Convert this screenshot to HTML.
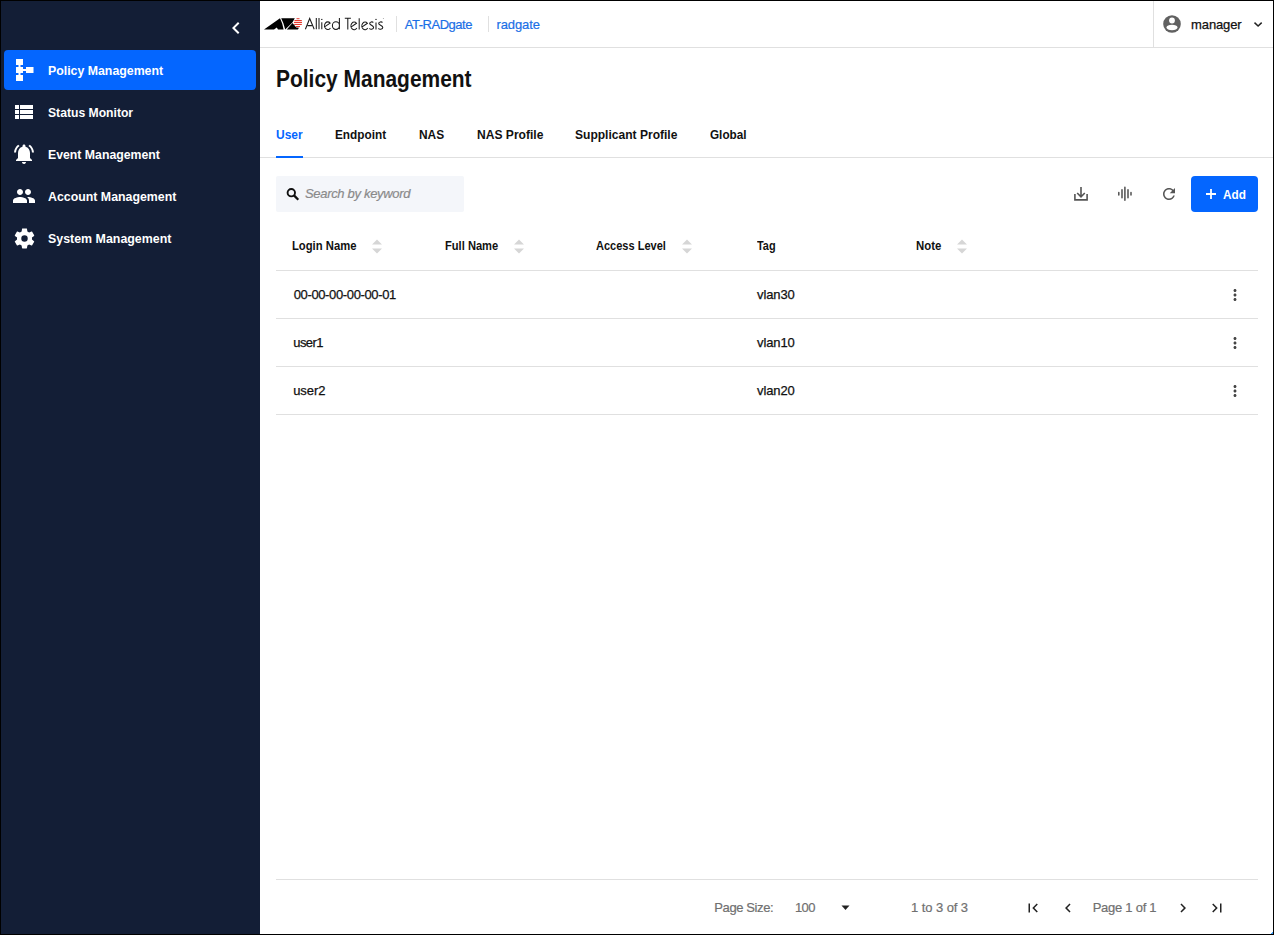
<!DOCTYPE html>
<html><head><meta charset="utf-8"><title>Policy Management</title>
<style>
html,body{margin:0;padding:0;}
body{width:1274px;height:935px;overflow:hidden;position:relative;background:#fff;font-family:"Liberation Sans",sans-serif;}
.t{position:absolute;white-space:nowrap;}
svg{display:block;}
#frame{position:absolute;left:0;top:0;width:1274px;height:935px;box-sizing:border-box;border:1px solid #000;pointer-events:none;}
</style></head><body>
<div style="position:absolute;left:1px;top:1px;width:259px;height:933px;background:#131e36"></div>
<svg style="position:absolute;left:224px;top:16px" width="24" height="24" viewBox="0 0 24 24"><path fill="#fff" d="M15.41 7.41L14 6l-6 6 6 6 1.41-1.41L10.83 12z"/></svg>
<div style="position:absolute;left:4px;top:50px;width:252px;height:40px;border-radius:4px;background:#0466ff"></div>
<svg style="position:absolute;left:0;top:0" width="60" height="260"><g fill="#fff"><rect x="16" y="59" width="7" height="6"/><rect x="16" y="67" width="7" height="6"/><rect x="16" y="75" width="7" height="6"/><rect x="18.5" y="64" width="2" height="12"/><rect x="26" y="67" width="7.5" height="6"/><rect x="22" y="69" width="5" height="2"/></g></svg>
<svg style="position:absolute;left:12px;top:100px" width="24" height="24" viewBox="0 0 24 24"><path fill="#fff" d="M3 14h4v-4H3v4zm0 5h4v-4H3v4zM3 9h4V5H3v4zm5 5h13v-4H8v4zm0 5h13v-4H8v4zM8 5v4h13V5H8z"/></svg>
<svg style="position:absolute;left:11.5px;top:141.5px" width="24" height="24" viewBox="0 0 24 24"><path fill="#fff" d="M7.58 4.08L6.15 2.65C3.75 4.48 2.17 7.3 2.03 10.5h2a8.445 8.445 0 013.55-6.42zm12.39 6.42h2c-.15-3.2-1.73-6.02-4.12-7.85l-1.42 1.43a8.495 8.495 0 013.54 6.42zM18 11c0-3.07-1.64-5.64-4.5-6.32V4c0-.83-.67-1.5-1.5-1.5s-1.5.67-1.5 1.5v.68C7.63 5.36 6 7.92 6 11v5l-2 2v1h16v-1l-2-2v-5zm-6 11c.14 0 .27-.01.4-.04.65-.14 1.18-.58 1.440-1.18.1-.24.15-.5.15-.78h-4c.01 1.1.9 2 2.01 2z"/></svg>
<svg style="position:absolute;left:12px;top:184px" width="24" height="24" viewBox="0 0 24 24"><path fill="#fff" d="M16 11c1.66 0 2.99-1.34 2.99-3S17.66 5 16 5c-1.66 0-3 1.34-3 3s1.34 3 3 3zm-8 0c1.66 0 2.99-1.34 2.99-3S9.66 5 8 5C6.34 5 5 6.34 5 8s1.34 3 3 3zm0 2c-2.33 0-7 1.17-7 3.5V19h14v-2.5c0-2.330-4.67-3.5-7-3.5zm8 0c-.29 0-.62.02-.97.05 1.16.84 1.97 1.97 1.97 3.45V19h6v-2.5c0-2.33-4.67-3.5-7-3.5z"/></svg>
<svg style="position:absolute;left:11.5px;top:225.5px" width="25" height="25" viewBox="0 0 24 24"><path fill="#fff" fill-rule="evenodd" d="M19.14 12.94c.04-.3.06-.61.06-.94 0-.32-.02-.64-.07-.94l2.03-1.58c.18-.14.23-.41.12-.61l-1.920-3.32c-.12-.22-.37-.29-.59-.22l-2.39.96c-.5-.38-1.03-.7-1.62-.94l-.36-2.54c-.04-.24-.24-.41-.48-.41h-3.84c-.24 0-.43.17-.47.41l-.36 2.54c-.59.24-1.13.57-1.62.94l-2.39-.96c-.22-.08-.47 0-.59.22L2.74 8.87c-.12.21-.08.47.12.61l2.03 1.58c-.05.3-.09.63-.09.94s.02.64.07.94l-2.03 1.58c-.18.14-.23.41-.12.61l1.92 3.32c.12.22.37.29.59.22l2.39-.96c.5.38 1.03.7 1.62.94l.36 2.54c.05.24.24.41.48.41h3.84c.24 0 .44-.17.47-.41l.36-2.54c.59-.24 1.13-.56 1.62-.94l2.39.96c.22.08.47 0 .59-.22l1.92-3.32c.12-.22.07-.47-.12-.61l-2.01-1.58zM12 15.1a3.1 3.1 0 1 0 0-6.2a3.1 3.1 0 1 0 0 6.2z"/></svg>
<div class="t" style="left:48.00px;top:63.99px;font-size:13px;line-height:13px;color:#fff;font-weight:bold;transform:scaleX(0.9483);transform-origin:0 0;">Policy Management</div>
<div class="t" style="left:48.00px;top:105.99px;font-size:13px;line-height:13px;color:#fff;font-weight:bold;transform:scaleX(0.9353);transform-origin:0 0;">Status Monitor</div>
<div class="t" style="left:47.90px;top:147.99px;font-size:13px;line-height:13px;color:#fff;font-weight:bold;transform:scaleX(0.9445);transform-origin:0 0;">Event Management</div>
<div class="t" style="left:47.90px;top:189.99px;font-size:13px;line-height:13px;color:#fff;font-weight:bold;transform:scaleX(0.9506);transform-origin:0 0;">Account Management</div>
<div class="t" style="left:47.90px;top:231.99px;font-size:13px;line-height:13px;color:#fff;font-weight:bold;transform:scaleX(0.9542);transform-origin:0 0;">System Management</div>
<div style="position:absolute;left:260px;top:47px;width:1013px;height:1px;background:#e0e0e0"></div>
<div style="position:absolute;left:1153px;top:1px;width:1px;height:46px;background:#e0e0e0"></div>
<div style="position:absolute;left:396px;top:16px;width:1px;height:16px;background:#e0e0e0"></div>
<div style="position:absolute;left:488px;top:16px;width:1px;height:16px;background:#e0e0e0"></div>
<svg style="position:absolute;left:0;top:0" width="310" height="40"><g fill="#000"><polygon points="264,29.6 280,18.2 282.2,23.5 283.6,29.6 278,29.6 276.8,27.4 274,29.6"/><polygon points="281.2,18.2 294.8,18.2 292.4,22.5 285.2,29.6 283.4,23.3"/><polygon points="286.8,29.6 292.5,23 296.3,27.6 299,27.8 297.8,29.6"/></g><g fill="#e53a30"><rect x="296.5" y="18.2" width="3" height="1"/><rect x="294.5" y="20" width="7.3" height="1.1"/><rect x="294" y="21.9" width="8" height="1.1"/><rect x="294.2" y="23.9" width="7.6" height="1.1"/><rect x="296" y="26" width="4" height="1.1"/></g></svg>
<svg style="position:absolute;left:0;top:0" width="400" height="40"><g fill="none" stroke="#1a1a1a" stroke-width="1.05"><path d="M305.4 29.3L309.7 18.5L314.2 29.3M307.6 25.6H311.9"/><path d="M316.3 18.1V29.3M319.0 18.1V29.3M321.8 22.3V29.3"/><path d="M324.50 26.90L330.10 23.10A3.2 3.85 0 1 0 330.40 27.90"/><path d="M339.4 18.1V29.3M339.4 25.6A3.5 3.85 0 1 0 332.4 25.6A3.5 3.85 0 1 0 339.4 25.6"/><path d="M344.8 18.3H350.9M347.8 18.3V29.4"/><path d="M350.90 27.10L356.50 23.30A3.2 3.85 0 1 0 356.80 28.10"/><path d="M359.2 18.3V29.4"/><path d="M361.80 27.10L367.40 23.30A3.2 3.85 0 1 0 367.70 28.10"/><path d="M373.30 22.60C372.70 21.60 369.60 21.50 369.70 23.50C369.80 25.40 373.60 25.20 373.60 27.60C373.60 29.40 369.80 29.70 369.30 28.40"/><path d="M376.0 22.5V29.4"/><path d="M382.50 22.60C381.90 21.60 378.60 21.50 378.70 23.50C378.80 25.40 382.80 25.20 382.80 27.60C382.80 29.40 378.80 29.70 378.30 28.40"/></g><g fill="#1a1a1a"><rect x="321.2" y="18.9" width="1.2" height="1.1"/><rect x="375.4" y="18.9" width="1.2" height="1.1"/><circle cx="383.4" cy="18.6" r="0.5" fill="#999"/></g></svg>
<div class="t" style="left:404.80px;top:17.99px;font-size:13px;line-height:13px;color:#1b6fe6;-webkit-text-stroke:0.2px #1b6fe6;letter-spacing:-0.490px;">AT-RADgate</div>
<div class="t" style="left:496.50px;top:17.99px;font-size:13px;line-height:13px;color:#1b6fe6;-webkit-text-stroke:0.2px #1b6fe6;letter-spacing:-0.115px;">radgate</div>
<svg style="position:absolute;left:1163.2px;top:15.1px" width="18" height="18" viewBox="0 0 18 18"><circle cx="9" cy="9" r="8.8" fill="#616161"/><circle cx="9" cy="5.5" r="2.9" fill="#fff"/><ellipse cx="9" cy="12.5" rx="5.5" ry="2.7" fill="#fff"/></svg>
<div class="t" style="left:1191.10px;top:17.99px;font-size:13px;line-height:13px;color:#111;letter-spacing:-0.135px;-webkit-text-stroke:0.25px #111;">manager</div>
<svg style="position:absolute;left:1250px;top:16px" width="16" height="16" viewBox="0 0 16 16"><path d="M4.5 6.6l3.6 3.4 3.6-3.4" stroke="#222" stroke-width="1.45" fill="none"/></svg>
<div class="t" style="left:276.20px;top:68.12px;font-size:23px;line-height:23px;color:#111;font-weight:bold;transform:scaleX(0.9109);transform-origin:0 0;">Policy Management</div>
<div style="position:absolute;left:260px;top:157px;width:1013px;height:1px;background:#e0e0e0"></div>
<div style="position:absolute;left:276px;top:156px;width:27px;height:2px;background:#0466ff"></div>
<div class="t" style="left:276.30px;top:128.19px;font-size:13px;line-height:13px;color:#0466ff;font-weight:bold;transform:scaleX(0.9236);transform-origin:0 0;">User</div>
<div class="t" style="left:335.10px;top:128.19px;font-size:13px;line-height:13px;color:#111;font-weight:bold;transform:scaleX(0.9073);transform-origin:0 0;">Endpoint</div>
<div class="t" style="left:418.80px;top:128.19px;font-size:13px;line-height:13px;color:#111;font-weight:bold;transform:scaleX(0.9180);transform-origin:0 0;">NAS</div>
<div class="t" style="left:476.50px;top:128.19px;font-size:13px;line-height:13px;color:#111;font-weight:bold;transform:scaleX(0.9285);transform-origin:0 0;">NAS Profile</div>
<div class="t" style="left:575.40px;top:128.19px;font-size:13px;line-height:13px;color:#111;font-weight:bold;transform:scaleX(0.9266);transform-origin:0 0;">Supplicant Profile</div>
<div class="t" style="left:710.30px;top:128.19px;font-size:13px;line-height:13px;color:#111;font-weight:bold;transform:scaleX(0.9023);transform-origin:0 0;">Global</div>
<div style="position:absolute;left:276px;top:176px;width:188px;height:36px;background:#f4f6fa;border-radius:2px"></div>
<svg style="position:absolute;left:280px;top:182px" width="24" height="24"><g stroke="#111" fill="none"><circle cx="11.3" cy="10.7" r="3.7" stroke-width="1.9"/><path d="M14 13.4l4.3 4.3" stroke-width="2.3"/></g></svg>
<div class="t" style="left:305.00px;top:187.09px;font-size:13px;line-height:13px;color:#8a8a8a;-webkit-text-stroke:0.2px #8a8a8a;font-style:italic;letter-spacing:-0.319px;">Search by keyword</div>
<svg style="position:absolute;left:1066px;top:180px" width="30" height="28"><g stroke="#555" stroke-width="1.6" fill="none"><path d="M15 7v9.5M11.2 13l3.8 3.8 3.8-3.8"/><path d="M8.9 14v5.9h12.2V14"/></g></svg>
<svg style="position:absolute;left:1110px;top:180px" width="30" height="28"><g stroke="#555" stroke-width="1.55" fill="none" stroke-linecap="round"><path d="M8.8 12.6v2.4M12 9.8v8M14.9 7.3v13M18 9.8v8M21 12.6v2.4"/></g></svg>
<svg style="position:absolute;left:1159.5px;top:185px" width="18" height="18" viewBox="0 0 24 24"><path fill="#555" d="M17.65 6.35C16.2 4.9 14.21 4 12 4c-4.42 0-7.99 3.58-7.99 8s3.57 8 7.99 8c3.73 0 6.84-2.55 7.73-6h-2.08c-.82 2.33-3.04 4-5.65 4-3.31 0-6-2.69-6-6s2.69-6 6-6c1.66 0 3.14.69 4.22 1.78L13 11h7V4l-2.35 2.35z"/></svg>
<div style="position:absolute;left:1191px;top:176px;width:67px;height:36px;border-radius:4px;background:#0466ff"></div>
<svg style="position:absolute;left:1204px;top:187px" width="14" height="14"><path d="M7 2v10M2 7h10" stroke="#fff" stroke-width="1.8"/></svg>
<div class="t" style="left:1223.10px;top:187.69px;font-size:13px;line-height:13px;color:#fff;font-weight:bold;transform:scaleX(0.9062);transform-origin:0 0;">Add</div>
<div class="t" style="left:292.10px;top:238.99px;font-size:13px;line-height:13px;color:#111;font-weight:bold;transform:scaleX(0.8657);transform-origin:0 0;">Login Name</div>
<svg style="position:absolute;left:371.8px;top:238.5px" width="10" height="15"><path d="M5 0.5L10 5.5H0z M0 9.5H10L5 14.5z" fill="#d6d6d6"/></svg>
<div class="t" style="left:444.60px;top:238.99px;font-size:13px;line-height:13px;color:#111;font-weight:bold;transform:scaleX(0.8564);transform-origin:0 0;">Full Name</div>
<svg style="position:absolute;left:513.6px;top:238.5px" width="10" height="15"><path d="M5 0.5L10 5.5H0z M0 9.5H10L5 14.5z" fill="#d6d6d6"/></svg>
<div class="t" style="left:596.00px;top:238.99px;font-size:13px;line-height:13px;color:#111;font-weight:bold;transform:scaleX(0.8484);transform-origin:0 0;">Access Level</div>
<svg style="position:absolute;left:681.5px;top:238.5px" width="10" height="15"><path d="M5 0.5L10 5.5H0z M0 9.5H10L5 14.5z" fill="#d6d6d6"/></svg>
<div class="t" style="left:756.70px;top:238.99px;font-size:13px;line-height:13px;color:#111;font-weight:bold;transform:scaleX(0.8397);transform-origin:0 0;">Tag</div>
<div class="t" style="left:916.20px;top:238.99px;font-size:13px;line-height:13px;color:#111;font-weight:bold;transform:scaleX(0.8757);transform-origin:0 0;">Note</div>
<svg style="position:absolute;left:956.8px;top:238.5px" width="10" height="15"><path d="M5 0.5L10 5.5H0z M0 9.5H10L5 14.5z" fill="#d6d6d6"/></svg>
<div style="position:absolute;left:276px;top:270px;width:982px;height:1px;background:#e0e0e0"></div>
<div style="position:absolute;left:276px;top:318px;width:982px;height:1px;background:#e0e0e0"></div>
<div style="position:absolute;left:276px;top:366px;width:982px;height:1px;background:#e0e0e0"></div>
<div style="position:absolute;left:276px;top:414px;width:982px;height:1px;background:#e0e0e0"></div>
<div class="t" style="left:293.70px;top:287.99px;font-size:13px;line-height:13px;color:#111;letter-spacing:-0.363px;-webkit-text-stroke:0.25px #111;">00-00-00-00-00-01</div>
<div class="t" style="left:757.00px;top:287.99px;font-size:13px;line-height:13px;color:#111;letter-spacing:-0.102px;-webkit-text-stroke:0.25px #111;">vlan30</div>
<div class="t" style="left:293.20px;top:335.99px;font-size:13px;line-height:13px;color:#111;letter-spacing:-0.530px;-webkit-text-stroke:0.25px #111;">user1</div>
<div class="t" style="left:757.00px;top:335.99px;font-size:13px;line-height:13px;color:#111;letter-spacing:-0.102px;-webkit-text-stroke:0.25px #111;">vlan10</div>
<div class="t" style="left:293.20px;top:383.99px;font-size:13px;line-height:13px;color:#111;letter-spacing:-0.080px;-webkit-text-stroke:0.25px #111;">user2</div>
<div class="t" style="left:757.00px;top:383.99px;font-size:13px;line-height:13px;color:#111;letter-spacing:-0.102px;-webkit-text-stroke:0.25px #111;">vlan20</div>
<svg style="position:absolute;left:1226px;top:286px" width="18" height="18" viewBox="0 0 24 24"><path fill="#444" d="M12 8c1.1 0 2-.9 2-2s-.9-2-2-2-2 .9-2 2 .9 2 2 2zm0 2c-1.1 0-2 .9-2 2s.9 2 2 2 2-.9 2-2-.9-2-2-2zm0 6c-1.1 0-2 .9-2 2s.9 2 2 2 2-.9 2-2-.9-2-2-2z"/></svg>
<svg style="position:absolute;left:1226px;top:334px" width="18" height="18" viewBox="0 0 24 24"><path fill="#444" d="M12 8c1.1 0 2-.9 2-2s-.9-2-2-2-2 .9-2 2 .9 2 2 2zm0 2c-1.1 0-2 .9-2 2s.9 2 2 2 2-.9 2-2-.9-2-2-2zm0 6c-1.1 0-2 .9-2 2s.9 2 2 2 2-.9 2-2-.9-2-2-2z"/></svg>
<svg style="position:absolute;left:1226px;top:382px" width="18" height="18" viewBox="0 0 24 24"><path fill="#444" d="M12 8c1.1 0 2-.9 2-2s-.9-2-2-2-2 .9-2 2 .9 2 2 2zm0 2c-1.1 0-2 .9-2 2s.9 2 2 2 2-.9 2-2-.9-2-2-2zm0 6c-1.1 0-2 .9-2 2s.9 2 2 2 2-.9 2-2-.9-2-2-2z"/></svg>
<div style="position:absolute;left:276px;top:879px;width:982px;height:1px;background:#e0e0e0"></div>
<div class="t" style="left:714.30px;top:901.19px;font-size:13px;line-height:13px;color:#707070;-webkit-text-stroke:0.2px #707070;letter-spacing:-0.397px;">Page Size:</div>
<div class="t" style="left:795.00px;top:901.19px;font-size:13px;line-height:13px;color:#707070;-webkit-text-stroke:0.2px #707070;letter-spacing:-0.645px;">100</div>
<svg style="position:absolute;left:841px;top:905px" width="10" height="6"><path d="M0.5 0.5h8l-4 4.5z" fill="#222"/></svg>
<div class="t" style="left:911.00px;top:901.19px;font-size:13px;line-height:13px;color:#707070;-webkit-text-stroke:0.2px #707070;letter-spacing:-0.072px;">1 to 3 of 3</div>
<div class="t" style="left:1092.70px;top:901.19px;font-size:13px;line-height:13px;color:#707070;-webkit-text-stroke:0.2px #707070;letter-spacing:-0.260px;">Page 1 of 1</div>
<svg style="position:absolute;left:1023.5px;top:899px" width="18" height="18" viewBox="0 0 24 24"><path fill="#222" d="M18.41 16.59L13.82 12l4.59-4.59L17 6l-6 6 6 6zM6 6h2v12H6z"/></svg>
<svg style="position:absolute;left:1058.7px;top:899px" width="18" height="18" viewBox="0 0 24 24"><path fill="#222" d="M15.41 7.41L14 6l-6 6 6 6 1.41-1.41L10.83 12z"/></svg>
<svg style="position:absolute;left:1173.8px;top:899px" width="18" height="18" viewBox="0 0 24 24"><path fill="#222" d="M10 6L8.59 7.41 13.17 12l-4.58 4.59L10 18l6-6z"/></svg>
<svg style="position:absolute;left:1207.6px;top:899px" width="18" height="18" viewBox="0 0 24 24"><path fill="#222" d="M5.59 7.41L10.18 12l-4.59 4.59L7 18l6-6-6-6zM16 6h2v12h-2z"/></svg>
<div id="frame"></div>
<div style="position:absolute;left:1272px;top:932px;width:1px;height:2px;background:#3d9cf5"></div><div style="position:absolute;left:1271px;top:933px;width:1px;height:1px;background:#3d9cf5"></div>
</body></html>
